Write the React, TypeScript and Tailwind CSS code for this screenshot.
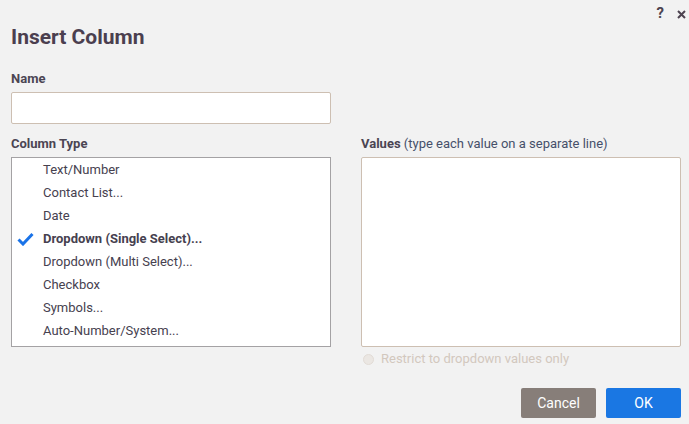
import React from "react";

const items = [
  "Text/Number",
  "Contact List...",
  "Date",
  "Dropdown (Single Select)...",
  "Dropdown (Multi Select)...",
  "Checkbox",
  "Symbols...",
  "Auto-Number/System...",
];

export default function App() {
  return (
    <div
      className="w-[689px] h-[424px] bg-[#f2f2f2] pl-[11px] pr-[8px] text-[#47424f]"
      style={{ fontFamily: "Roboto, 'Noto Sans', sans-serif" }}
    >
      <div className="h-6 flex justify-end items-center gap-[13px] -mr-[5px] pt-[3px] text-[#4d4350]">
        <span className="text-[15px] font-bold leading-none">?</span>
        <svg width="9" height="9" viewBox="0 0 9 9" className="mt-[1px]">
          <path d="M1 1 L8 8 M8 1 L1 8" stroke="#4d4350" strokeWidth="2" />
        </svg>
      </div>
      <div className="text-[21px] font-bold leading-[26px] text-[#4b3f4f]">Insert Column</div>
      <div className="mt-[21px] text-[13px] font-bold leading-4 text-[#4b4553]">Name</div>
      <div className="mt-[5px] w-[320px] h-[32px] bg-white border border-[#cdbfb2] rounded-[2px]" />
      <div className="mt-[12px] grid grid-cols-[320px_320px] gap-x-[30px]">
        <div>
          <div className="text-[13px] font-bold leading-4 text-[#4b4553]">Column Type</div>
          <div className="mt-[5px] h-[190px] bg-white border border-[#a4a2a4] pb-[4px]">
            {items.map((it, i) => (
              <div key={it} className="relative h-[23px] leading-[23px] text-[13px] pl-[31px] text-[#46414f]">
                {i === 3 && (
                  <svg
                    width="17"
                    height="14"
                    viewBox="0 0 17 14"
                    className="absolute left-[5px] top-[5px]"
                  >
                    <path d="M1.5 7.5 L6 12 L15.5 2" stroke="#1a73e8" strokeWidth="3" fill="none" />
                  </svg>
                )}
                <span className={i === 3 ? "font-bold" : ""}>{it}</span>
              </div>
            ))}
          </div>
        </div>
        <div>
          <div className="text-[13px] leading-4 text-[#4b4553]">
            <span className="font-bold">Values</span>{" "}
            <span className="text-[#46506a]">(type each value on a separate line)</span>
          </div>
          <div className="mt-[5px] h-[190px] bg-white border border-[#cdbfb2] rounded-[2px]" />
          <div className="mt-[4px] flex items-center gap-[7px] pl-[2px] h-4">
            <span className="w-[11px] h-[11px] rounded-full border border-[#e2dcd6] bg-[#ebe7e3]" />
            <span className="text-[13px] leading-4 text-[#d2c8be]">Restrict to dropdown values only</span>
          </div>
          <div className="mt-[21px] flex justify-end gap-[10px]">
            <button className="w-[75px] h-[30px] bg-[#877e79] text-white text-[14px] rounded-[2px]">Cancel</button>
            <button className="w-[75px] h-[30px] bg-[#1a77e3] text-white text-[14px] rounded-[2px]">OK</button>
          </div>
        </div>
      </div>
    </div>
  );
}
